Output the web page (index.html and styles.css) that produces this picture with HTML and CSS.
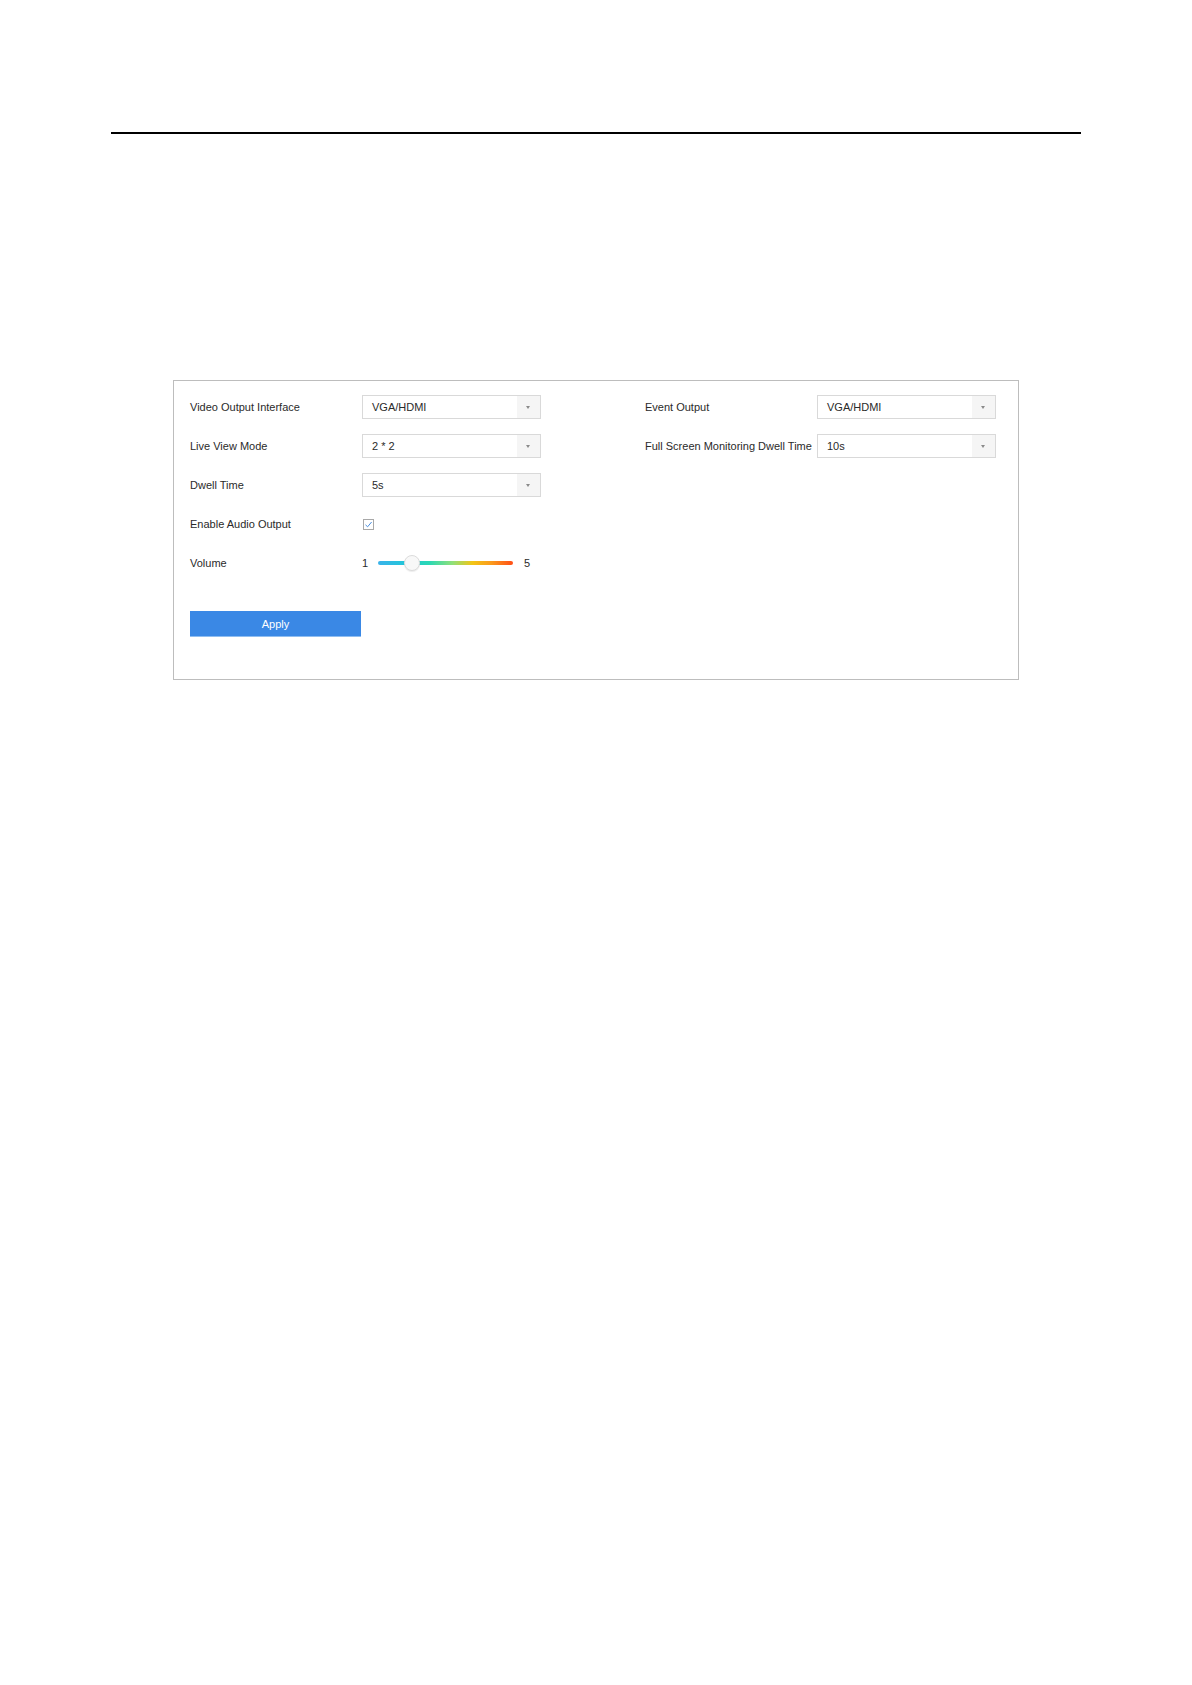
FILE: index.html
```html
<!DOCTYPE html>
<html lang="en">
<head>
  <meta charset="UTF-8">
  <title>Live View Settings</title>
  <link rel="stylesheet" href="styles.css">
</head>
<body>
  <div class="page">
    <div class="rule"></div>

    <section class="panel">
      <div class="columns">
        <div class="col">
          <div class="row">
            <label class="label">Video Output Interface</label>
            <div class="select"><span class="value">VGA/HDMI</span><span class="arrow"></span></div>
          </div>
          <div class="row">
            <label class="label">Live View Mode</label>
            <div class="select"><span class="value">2 * 2</span><span class="arrow"></span></div>
          </div>
          <div class="row">
            <label class="label">Dwell Time</label>
            <div class="select"><span class="value">5s</span><span class="arrow"></span></div>
          </div>
          <div class="row">
            <label class="label">Enable Audio Output</label>
            <span class="checkbox">
              <svg width="9" height="9" viewBox="0 0 9 9"><polyline points="1.5,4.8 3.6,6.8 7.6,2" fill="none" stroke="#4a8fe0" stroke-width="1"/></svg>
            </span>
          </div>
          <div class="row">
            <label class="label">Volume</label>
            <div class="slider">
              <span class="num">1</span>
              <div class="track">
                <span class="thumb"></span>
              </div>
              <span class="num">5</span>
            </div>
          </div>
        </div>

        <div class="col">
          <div class="row">
            <label class="label">Event Output</label>
            <div class="select"><span class="value">VGA/HDMI</span><span class="arrow"></span></div>
          </div>
          <div class="row">
            <label class="label">Full Screen Monitoring Dwell Time</label>
            <div class="select"><span class="value">10s</span><span class="arrow"></span></div>
          </div>
        </div>
      </div>

      <button type="button" class="apply">Apply</button>
    </section>
  </div>
</body>
</html>
```

FILE: styles.css
```css
* {
  box-sizing: border-box;
}

body {
  margin: 0;
  background-color: #fff;
  font-family: "Liberation Sans", Arial, sans-serif;
  font-size: 11px;
  color: #2a2a2a;
}

.page {
  padding: 132px 0 0 111px;
  width: 1081px;
}

.rule {
  height: 2px;
  background-color: #000;
}

.panel {
  margin: 246px 0 0 62px;
  width: 846px;
  border: 1px solid #bdbdbd;
  padding: 14px 21px 42px 16px;
}

.columns {
  display: flex;
  gap: 104px;
}

.col {
  width: 351px;
}

.row {
  display: flex;
  align-items: center;
  height: 24px;
  margin-bottom: 15px;
}

.row:last-child {
  margin-bottom: 0;
}

.label {
  width: 172px;
  flex-shrink: 0;
  white-space: nowrap;
}

.select {
  display: flex;
  width: 179px;
  height: 24px;
  border: 1px solid #d9d9d9;
  background-color: #fff;
}

.select .value {
  flex: 1;
  padding-left: 9px;
  line-height: 22px;
}

.select .arrow {
  width: 23px;
  background-color: #f5f5f5;
  position: relative;
}

.select .arrow::after {
  content: "";
  position: absolute;
  left: 9px;
  top: 10px;
  border-left: 2.5px solid transparent;
  border-right: 2.5px solid transparent;
  border-top: 3px solid #8a8a8a;
}

.checkbox {
  display: inline-flex;
  align-items: center;
  justify-content: center;
  width: 11px;
  height: 11px;
  margin-left: 1px;
  border: 1px solid #a8a8a8;
}

.slider {
  display: flex;
  align-items: center;
  width: 179px;
}

.slider .num {
  width: 16px;
  padding-left: 0;
}

.slider .num:last-child {
  padding-left: 11px;
}

.track {
  position: relative;
  width: 135px;
  height: 4px;
  border-radius: 2px;
  background: linear-gradient(to right, #3ab2ea 0%, #22c6d9 20%, #2ad8b4 38%, #8fe07a 55%, #f2c515 70%, #fb9a1c 84%, #ff4d16 100%);
}

.thumb {
  position: absolute;
  left: 26px;
  top: -6px;
  width: 16px;
  height: 16px;
  border-radius: 50%;
  background-color: #f8f8f8;
  border: 1px solid #dcdcdc;
  box-shadow: 0 1px 1px rgba(0, 0, 0, 0.08);
}

.apply {
  display: block;
  margin-top: 36px;
  width: 171px;
  height: 26px;
  border: none;
  border-bottom: 1px solid #8fbdf0;
  background-color: #3a88e5;
  color: #fff;
  font-family: "Liberation Sans", Arial, sans-serif;
  font-size: 11px;
  padding: 0;
}
```
